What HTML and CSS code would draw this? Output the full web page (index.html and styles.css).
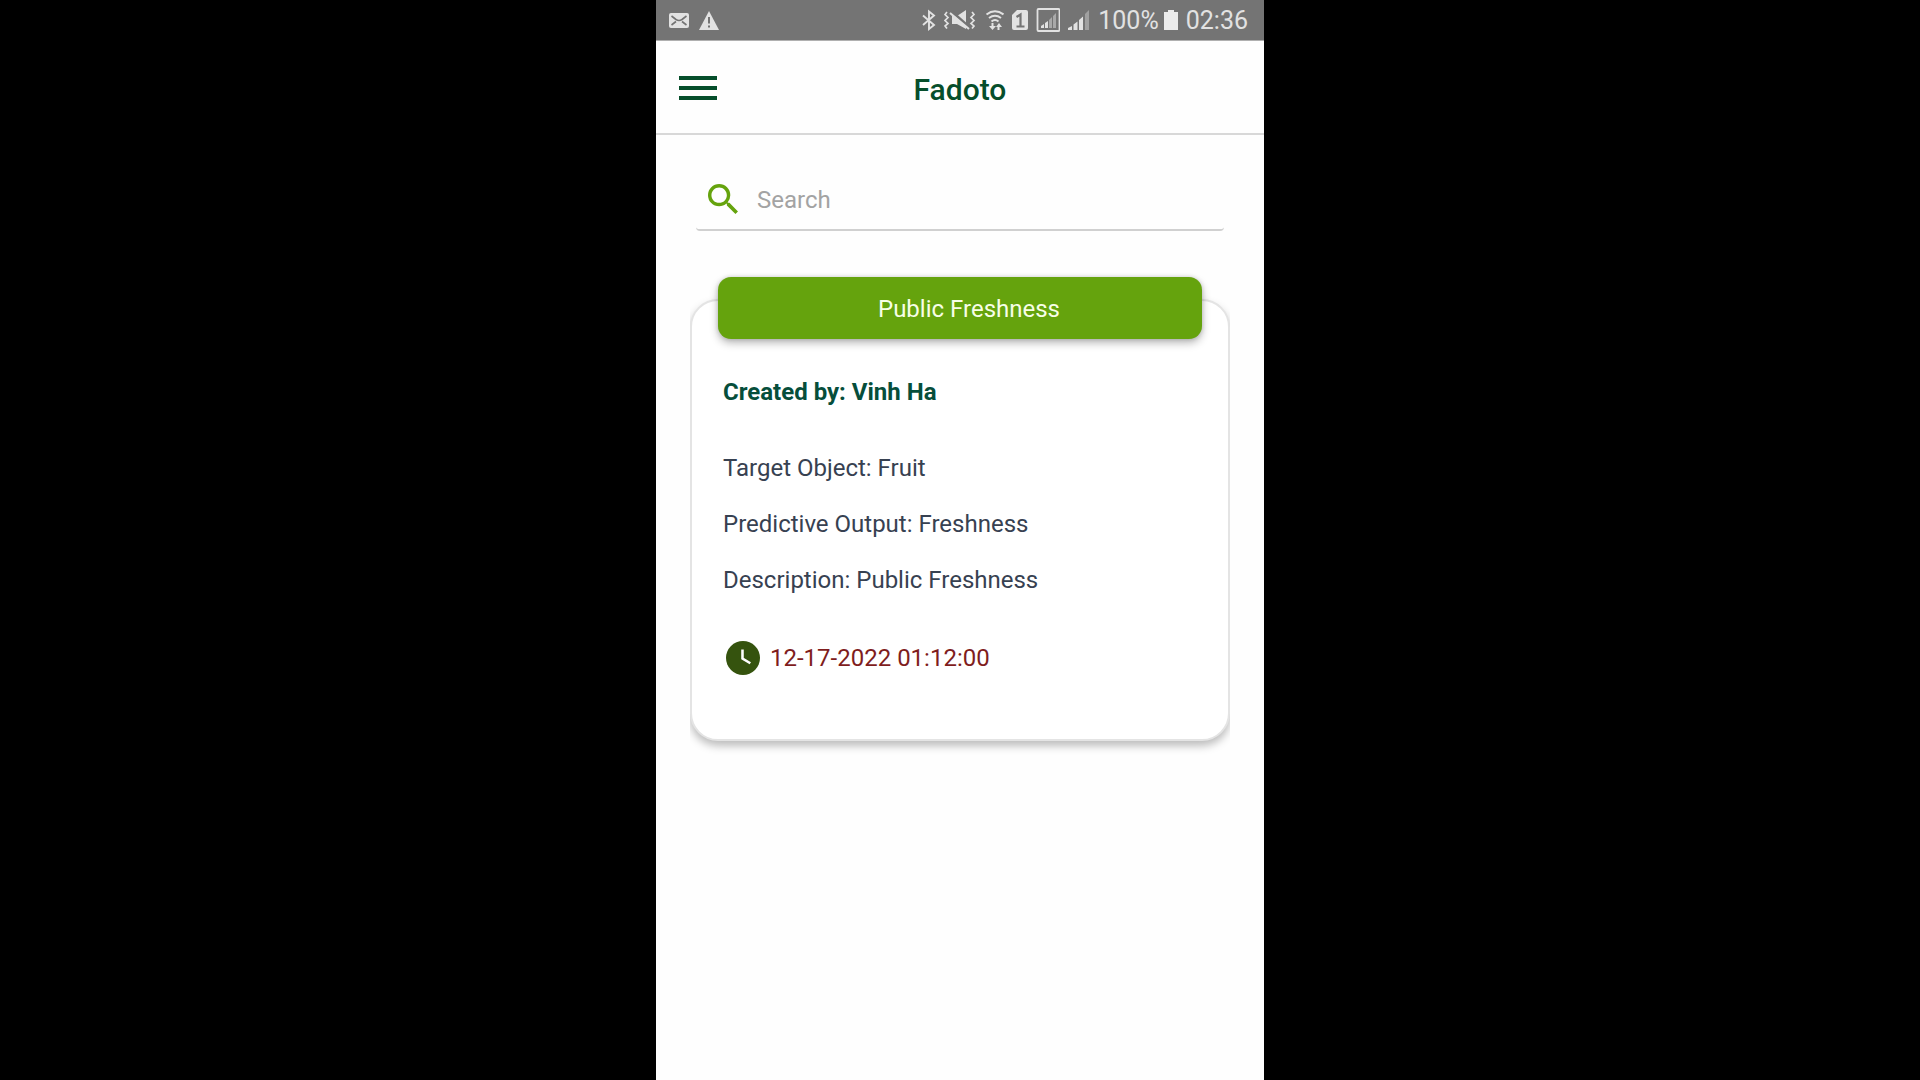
FILE: index.html
```html
<!DOCTYPE html>
<html lang="en">
<head>
  <meta charset="utf-8">
  <meta name="viewport" content="width=device-width, initial-scale=1">
  <title>Fadoto</title>
  <link rel="stylesheet" href="styles.css">
</head>
<body>
  <div class="phone">
    <div class="status">
      <div class="status-group">
        <svg width="20" height="24" viewBox="0 0 20 24" aria-hidden="true"><rect y="5" width="20" height="15" rx="2" fill="#e2e2e2"/><path d="M2.500 8 7 11.500Q10 13.500 13 11.500L17.500 8M2.500 17 7 13.500M17.500 17 13 13.500" fill="none" stroke="#747474" stroke-width="1.600"/></svg>
        <svg width="20" height="24" viewBox="0 0 20 24" aria-hidden="true"><path d="M10 3 20 22H0Z" fill="#e2e2e2"/><path d="M10 9v6.500M10 17.500v2" stroke="#747474" stroke-width="2"/></svg>
      </div>
      <div class="status-group">
        <svg width="14" height="24" viewBox="0 0 14 24" aria-hidden="true"><path d="M1 7.500 12 17 7 21V3.500L12 7.500 1 17" fill="none" stroke="#e2e2e2" stroke-width="1.900"/></svg>
        <svg width="32" height="24" viewBox="0 0 32 24" aria-hidden="true"><path d="M3 4 1 6.500 4 9.500 1 12.500 4 15.500 1 18 3 20.500M28 4l2 2.500-3 3 3 3-3 3 3 2.500-2 2.500" fill="none" stroke="#e2e2e2" stroke-width="1.700"/><path d="M8 8h5l9-6v19l-9-5H8Z" fill="#e2e2e2"/><path d="M7 3 24 18" stroke="#747474" stroke-width="3"/><path d="M6 5 25 21" stroke="#e2e2e2" stroke-width="2"/></svg>
        <svg width="20" height="24" viewBox="0 0 20 24" aria-hidden="true"><path d="M2.500 6.500q8.500-6.500 17 0M5 10q6-4.500 12 0M7.500 13.500q3.500-3 7 0" fill="none" stroke="#e2e2e2" stroke-width="2"/><path d="M7.500 15v3H5l3.500 4 3.500-4H9.500v-3ZM13.500 22v-3H12l3-4 3 4h-2.500v3Z" fill="#e2e2e2"/></svg>
        <svg width="16" height="24" viewBox="0 0 16 24" aria-hidden="true"><path d="M5 2h9q2 0 2 2v16q0 2-2 2H2q-2 0-2-2V7Z" fill="#e2e2e2"/><path d="M4.500 9 8.500 6.500V18M4.500 18.500h8" fill="none" stroke="#747474" stroke-width="2.200"/></svg>
        <svg width="24" height="24" viewBox="0 0 24 24" aria-hidden="true"><rect x="1.500" y="1" width="22" height="22" rx="1" fill="none" stroke="#e2e2e2" stroke-width="1.800"/><path d="M5 20v-2l3-2v4ZM9 20v-5l3-2v7Z" fill="#e2e2e2"/><path d="M13 20v-8l3-3v11ZM17 20V8l3-3v15Z" fill="#a9a9a9"/></svg>
        <svg width="22" height="24" viewBox="0 0 22 24" aria-hidden="true"><path d="M0 22v-2l4-2v4ZM5.500 22v-5.500l4-3V22ZM11 22V12l4-3.500V22Z" fill="#e2e2e2"/><path d="M17 22V6l4-4v20Z" fill="#a0a0a0"/></svg>
        <span class="battery">100%<svg width="14" height="24" viewBox="0 0 14 24" aria-hidden="true"><path d="M4 2h6v2h4v18H0V4h4Z" fill="#ececec"/></svg></span>
        <span>02:36</span>
      </div>
    </div>

    <header class="appbar">
      <button class="menu" type="button" aria-label="Menu">
        <svg width="38" height="26" viewBox="0 0 38 26" aria-hidden="true"><path d="M0 3h38M0 13h38M0 23h38" stroke="currentColor" stroke-width="4"/></svg>
      </button>
      <h1 class="title">Fadoto</h1>
    </header>

    <main class="content">
      <label class="search">
        <svg width="30" height="30" viewBox="3 3 17.500 17.500" aria-hidden="true"><path fill="currentColor" d="M15.500 14h-.79l-.28-.27A6.471 6.471 0 0 0 16 9.500 6.500 6.500 0 1 0 9.500 16c1.610 0 3.090-.59 4.230-1.570l.27.28v.79l5 4.990L20.490 19l-4.990-5zm-6 0C7.010 14 5 11.990 5 9.500S7.010 5 9.500 5 14 7.010 14 9.500 11.990 14 9.500 14z"/></svg>
        <input class="search-input" type="search" placeholder="Search" aria-label="Search">
      </label>

      <article class="model">
        <button class="model-name" type="button">Public Freshness</button>
        <div class="card">
          <h2 class="author">Created by: Vinh Ha</h2>
          <div class="details">
            <p>Target Object: Fruit</p>
            <p>Predictive Output: Freshness</p>
            <p>Description: Public Freshness</p>
          </div>
          <div class="created">
            <svg width="34" height="34" viewBox="2 2 20 20" aria-hidden="true"><circle cx="12" cy="12" r="10" fill="#35530e"/><path d="M11.700 7v5.300l4.600 2.800" fill="none" stroke="#fff" stroke-width="1.500"/></svg>
            <time datetime="2022-12-17T01:12:00">12-17-2022 01:12:00</time>
          </div>
        </div>
      </article>
    </main>
  </div>
</body>
</html>
```
FILE: styles.css
```css
* {
  box-sizing: border-box;
}

body {
  margin: 0;
  background: #000;
  color: #374151;
  font: 24px/32px Roboto, "Liberation Sans", sans-serif;
}

h1,
h2,
p {
  margin: 0;
}

svg {
  display: block;
  flex: none;
}

button {
  border: 0;
  font: inherit;
  cursor: pointer;
}

.phone {
  max-width: 608px;
  min-height: 100vh;
  margin: 0 auto;
  background: #fefefe;
}

.status {
  display: flex;
  align-items: center;
  justify-content: space-between;
  height: 41px;
  padding: 0 16px 0 13px;
  border-bottom: 1px solid #b0b0b0;
  background: #747474;
  color: #e2e2e2;
  font-size: 25px;
  line-height: 34px;
}

.status-group {
  display: flex;
  align-items: center;
  gap: 8px;
}

.status-group:first-child {
  gap: 10px;
}

.status span {
  padding-top: 2px;
}

.battery {
  display: flex;
  align-items: center;
  gap: 5px;
}

.battery svg {
  margin-top: -2px;
}

.appbar {
  display: grid;
  grid-template-columns: 1fr auto 1fr;
  align-items: center;
  height: 94px;
  padding: 2px 23px 0;
  border-bottom: 2px solid #d8d8d8;
  color: #064e2b;
}

.menu {
  justify-self: start;
  padding: 0;
  background: none;
  color: inherit;
}

.title {
  padding-top: 4px;
  font-size: 30px;
  font-weight: 500;
  line-height: 40px;
}

.content {
  padding: 32px 34px;
}

.search {
  display: flex;
  align-items: center;
  gap: 19px;
  height: 64px;
  margin: 0 6px;
  padding: 2px 12px 0;
  border-bottom: 2px solid #d0d0d0;
  border-radius: 4px;
  color: #65a30d;
}

.search-input {
  flex: 1;
  min-width: 0;
  padding: 2px 0 0;
  border: 0;
  outline: 0;
  background: none;
  color: #374151;
  font: inherit;
}

.search-input::placeholder {
  color: #a3a3a3;
  opacity: 1;
}

.model {
  display: flex;
  flex-direction: column;
  margin-top: 46px;
}

.model-name {
  z-index: 1;
  height: 62px;
  margin: 0 28px -40px;
  padding: 2px 0 0 18px;
  border-radius: 13px;
  background: #65a30d;
  box-shadow: 0 4px 8px rgba(0, 0, 0, 0.28), 0 0 4px rgba(0, 0, 0, 0.15);
  color: #f7fee7;
}

.card {
  padding: 75px 31px 64px;
  border: 2px solid #e4e4e4;
  border-radius: 28px;
  background: #fff;
  box-shadow: 0 5px 9px rgba(0, 0, 0, 0.26);
  clip-path: inset(-20px 0);
}

.author {
  color: #064e3b;
  font-size: 24px;
  font-weight: 700;
}

.details {
  display: grid;
  gap: 24px;
  margin-top: 44px;
}

.created {
  display: flex;
  align-items: center;
  gap: 10px;
  margin: 45px 3px 0;
  color: #7f1d1d;
}
```
